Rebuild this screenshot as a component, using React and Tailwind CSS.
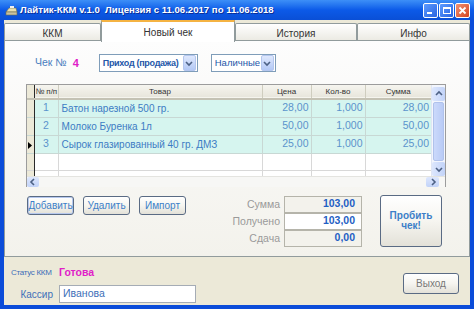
import React from 'react';

const rows = [
  { n: 1, name: 'Батон нарезной 500 гр.', price: '28,00', qty: '1,000', sum: '28,00' },
  { n: 2, name: 'Молоко Буренка 1л', price: '50,00', qty: '1,000', sum: '50,00' },
  { n: 3, name: 'Сырок глазированный 40 гр. ДМЗ', price: '25,00', qty: '1,000', sum: '25,00', current: true },
];

const Chevron = ({ dir }) => {
  const d = {
    up: 'M2 6 L5 3 L8 6',
    down: 'M2 4 L5 7 L8 4',
    left: 'M6 2 L3 5 L6 8',
    right: 'M4 2 L7 5 L4 8',
  }[dir];
  return (
    <svg width="10" height="10" viewBox="0 0 10 10">
      <path d={d} fill="none" stroke="#4d6185" strokeWidth="1.6" />
    </svg>
  );
};

const XpSelect = ({ label, width, bold }) => (
  <div className={`flex items-center h-[18px] border border-[#7f9db9] bg-white ${width}`}>
    <span className={`flex-1 pl-[3px] text-[#2456a8] leading-none whitespace-nowrap ${bold ? 'font-bold text-[9px] tracking-[-0.3px]' : 'text-[9.5px]'}`}>{label}</span>
    <span className="w-[13px] h-[16px] mr-px shrink-0 flex items-center justify-center rounded-[2px] bg-gradient-to-b from-[#dfe8fd] to-[#b3c8f5] border border-[#b4c6ee]">
      <Chevron dir="down" />
    </span>
  </div>
);

const XpButton = ({ children, className = '' }) => (
  <button className={`rounded-[3px] border border-[#5a6b84] bg-gradient-to-b from-[#ffffff] via-[#f6f5f0] to-[#e3e1d8] text-[10px] text-[#3c7fc8] leading-none ${className}`}>
    {children}
  </button>
);

const Tab = ({ label, width, active }) =>
  active ? (
    <div className={`${width} h-[22px] -mb-px z-10 bg-white border-x border-[#919b9c] border-t-2 border-t-[#f5b342] flex items-center justify-center text-[10px] text-[#333]`}>
      {label}
    </div>
  ) : (
    <div className={`${width} h-[19px] mt-[3px] bg-gradient-to-b from-[#ffffff] to-[#e9e8e0] border border-b-0 border-[#919b9c] rounded-t-[2px] flex items-center justify-center text-[10px] text-[#333]`}>
      {label}
    </div>
  );

export default function App() {
  return (
    <div className="w-[474px] h-[309px] bg-[#0b4cd9] flex flex-col overflow-hidden" style={{ fontFamily: '"Liberation Sans", Arial, sans-serif' }}>
      {/* Title bar */}
      <div className="h-[20px] shrink-0 bg-gradient-to-b from-[#3d8ff7] via-[#0c5ae8] to-[#0a4fd6] flex items-center pl-[5px] pr-[4px]">
        <svg width="13" height="11" viewBox="0 0 13 11" className="mr-[2px]">
          <path d="M1 7 L4 3 L11 3 L12 7 Z" fill="#e8e0b0" stroke="#6b6b50" strokeWidth="0.6" />
          <rect x="1" y="7" width="11" height="3" fill="#c9c2a0" stroke="#6b6b50" strokeWidth="0.6" />
          <rect x="5" y="1" width="4" height="2" fill="#f0f0f0" />
        </svg>
        <span className="text-white font-bold text-[9.6px] whitespace-nowrap leading-none" style={{ textShadow: '1px 1px 0 #0a2f9a' }}>
          Лайтик-ККМ v.1.0&nbsp;&nbsp;Лицензия с 11.06.2017 по 11.06.2018
        </span>
        <div className="ml-auto flex gap-px">
          <div className="w-[15px] h-[15px] rounded-[2px] border border-white bg-gradient-to-br from-[#5c9bff] to-[#2a63e0] flex items-end justify-start p-[3px]">
            <div className="w-[5px] h-[2px] bg-white" />
          </div>
          <div className="w-[15px] h-[15px] rounded-[2px] border border-white bg-gradient-to-br from-[#5c9bff] to-[#2a63e0] flex items-center justify-center">
            <div className="w-[8px] h-[7px] border border-white border-t-2" />
          </div>
          <div className="w-[15px] h-[15px] rounded-[2px] border border-white bg-gradient-to-br from-[#f09070] to-[#d4431c] flex items-center justify-center">
            <svg width="9" height="9" viewBox="0 0 9 9">
              <path d="M1.5 1.5 L7.5 7.5 M7.5 1.5 L1.5 7.5" stroke="white" strokeWidth="1.8" />
            </svg>
          </div>
        </div>
      </div>

      {/* Window body */}
      <div className="flex-1 mx-[4px] mb-[4px] bg-[#ece9d8] flex flex-col">
        {/* Tabs */}
        <div className="h-[20px] flex items-start">
          <Tab label="ККМ" width="w-[97px]" />
          <Tab label="Новый чек" width="w-[134px]" active />
          <Tab label="История" width="w-[122px]" />
          <Tab label="Инфо" width="w-[113px]" />
        </div>

        {/* Tab panel */}
        <div className="h-[217px] border border-[#919b9c] bg-gradient-to-b from-[#fdfdfd] to-[#f3f2ec] pl-[21px] pr-[20px]">
          <div className="mt-[13px] h-[18px] flex items-center">
            <span className="ml-[9px] text-[10.5px] text-[#4a7ec0]">Чек №</span>
            <span className="ml-[6px] text-[11px] font-bold text-[#e020c8]">4</span>
            <div className="ml-[20px]">
              <XpSelect label="Приход (продажа)" width="w-[99px]" bold />
            </div>
            <div className="ml-[13px]">
              <XpSelect label="Наличные" width="w-[65px]" />
            </div>
          </div>

          {/* Grid */}
          <div className="mt-[12px] w-[420px] h-[103px] border border-[#9c9c9c] bg-white flex flex-col">
            <div className="flex h-[91px]">
              <table className="w-[404px] table-fixed border-collapse text-[10px]">
                <colgroup>
                  <col className="w-[7px]" />
                  <col className="w-[24px]" />
                  <col className="w-[204px]" />
                  <col className="w-[49px]" />
                  <col className="w-[54px]" />
                  <col className="w-[66px]" />
                </colgroup>
                <thead>
                  <tr className="h-[14px] bg-gradient-to-b from-[#f6f5ef] to-[#e8e6dc] text-[8px] text-[#333] border-b-2 border-[#c4c2b4]">
                    <th className="border-r border-[#2a2a2a] bg-[#ece9d8] p-0" />
                    <th className="font-normal text-left pl-px border-r border-[#cfcdbf] p-0 whitespace-nowrap">№ п/п</th>
                    <th className="font-normal border-r border-[#cfcdbf] p-0">Товар</th>
                    <th className="font-normal border-r border-[#cfcdbf] p-0">Цена</th>
                    <th className="font-normal border-r border-[#cfcdbf] p-0">Кол-во</th>
                    <th className="font-normal p-0">Сумма</th>
                  </tr>
                </thead>
                <tbody>
                  {rows.map((r) => (
                    <tr key={r.n} className="h-[18px] bg-[#d6f5ef] border-b border-[#c8d8d4]">
                      <td className="bg-[#ece9d8] border-r border-[#2a2a2a] p-0 relative">
                        {r.current && (
                          <svg width="5" height="7" viewBox="0 0 5 7" className="absolute left-[1px] top-[6px]">
                            <path d="M0 0 L4 3.5 L0 7 Z" fill="#000" />
                          </svg>
                        )}
                      </td>
                      <td className="text-center text-[#5b93cc] border-r border-[#c8d8d4] p-0 text-[10.5px]">{r.n}</td>
                      <td className="pl-[3px] text-[#3d7cc4] border-r border-[#c8d8d4] p-0 whitespace-nowrap">{r.name}</td>
                      <td className="text-right pr-[2px] text-[#5b93cc] border-r border-[#c8d8d4] p-0 text-[10.5px]">{r.price}</td>
                      <td className="text-right pr-[2px] text-[#5b93cc] border-r border-[#c8d8d4] p-0 text-[10.5px]">{r.qty}</td>
                      <td className="text-right pr-[2px] text-[#5b93cc] p-0 text-[10.5px]">{r.sum}</td>
                    </tr>
                  ))}
                  {[17, 7].map((h, i) => (
                    <tr key={i} className={`${h === 17 ? 'h-[17px] border-b border-[#d8d8d8]' : 'h-[7px]'} bg-white`}>
                      <td className="bg-[#ece9d8] border-r border-[#2a2a2a] p-0" />
                      <td className="border-r border-[#d8d8d8] p-0" />
                      <td className="border-r border-[#d8d8d8] p-0" />
                      <td className="border-r border-[#d8d8d8] p-0" />
                      <td className="border-r border-[#d8d8d8] p-0" />
                      <td className="p-0" />
                    </tr>
                  ))}
                </tbody>
              </table>
              {/* Vertical scrollbar */}
              <div className="w-[14px] flex flex-col bg-[#f3f6fd] border-l border-[#e0e6f4]">
                <div className="h-[14px] mt-[2px] flex items-center justify-center rounded-[2px] bg-gradient-to-r from-[#dde7fd] to-[#c2d3f8]">
                  <Chevron dir="up" />
                </div>
                <div className="flex-1 mx-px my-px rounded-[2px] bg-gradient-to-r from-[#cbd9fb] to-[#b9cbf6] border border-[#b0c2ec]" />
                <div className="h-[14px] flex items-center justify-center rounded-[2px] bg-gradient-to-r from-[#dde7fd] to-[#c2d3f8]">
                  <Chevron dir="down" />
                </div>
              </div>
            </div>
            {/* Horizontal scrollbar */}
            <div className="flex-1 flex items-center bg-[#f7f7f5] border-t border-[#e4e4e0] pr-[6px]">
              <div className="w-[12px] h-[10px] flex items-center justify-center rounded-[2px] bg-gradient-to-b from-[#dde7fd] to-[#c2d3f8]">
                <Chevron dir="left" />
              </div>
              <div className="flex-1" />
              <div className="w-[13px] h-[10px] flex items-center justify-center rounded-[2px] bg-gradient-to-b from-[#dde7fd] to-[#c2d3f8]">
                <Chevron dir="right" />
              </div>
            </div>
          </div>

          {/* Lower section */}
          <div className="mt-[9px] flex items-start">
            <div className="flex gap-[9px] pl-px">
              <XpButton className="w-[47px] h-[19px] border-[#3c4a66] shadow-[inset_0_0_0_1px_#b6c8ee]">Добавить</XpButton>
              <XpButton className="w-[47px] h-[19px]">Удалить</XpButton>
              <XpButton className="w-[47px] h-[19px]">Импорт</XpButton>
            </div>
            <div className="ml-[29px] flex flex-col">
              {[
                ['Сумма', '103,00', 'bg-[#f3f2ec]'],
                ['Получено', '103,00', 'bg-white'],
                ['Сдача', '0,00', 'bg-[#f3f2ec]'],
              ].map(([l, v, bg]) => (
                <div key={l} className="flex items-center h-[17px]">
                  <span className="w-[69px] text-right pr-[4px] text-[10.5px] text-[#9a9a9a]">{l}</span>
                  <div className={`w-[78px] h-[17px] -mt-px border border-[#b5b4aa] ${bg} flex items-center justify-end pr-[6px] text-[10.5px] font-bold text-[#1f5fc4]`}>
                    {v}
                  </div>
                </div>
              ))}
            </div>
            <XpButton className="ml-[18px] -mt-px w-[62px] h-[52px] font-bold text-[10.5px] leading-[14px] text-[#2b74d0]">
              Пробить
              <br />
              чек!
            </XpButton>
          </div>
        </div>

        {/* Bottom area */}
        <div className="flex-1 flex items-start">
          <div className="flex flex-col pl-[7px] pt-[9px]">
            <div className="flex items-center h-[14px]">
              <span className="w-[42px] text-[8px] tracking-[-0.3px] text-[#3d6fb8] whitespace-nowrap">Статус ККМ</span>
              <span className="ml-[6px] text-[10.5px] font-bold text-[#e020c8]">Готова</span>
            </div>
            <div className="flex items-center mt-[5px]">
              <span className="w-[42px] text-right text-[10px] text-[#3d6fb8]">Кассир</span>
              <div className="ml-[6px] w-[137px] h-[18px] border border-[#a5acb5] bg-white flex items-center pl-[3px] text-[10.5px] text-[#3d6fb8]">
                Иванова
              </div>
            </div>
          </div>
          <XpButton className="ml-auto mr-[11px] mt-[16px] w-[56px] h-[21px] text-[#777]">Выход</XpButton>
        </div>
      </div>
    </div>
  );
}
